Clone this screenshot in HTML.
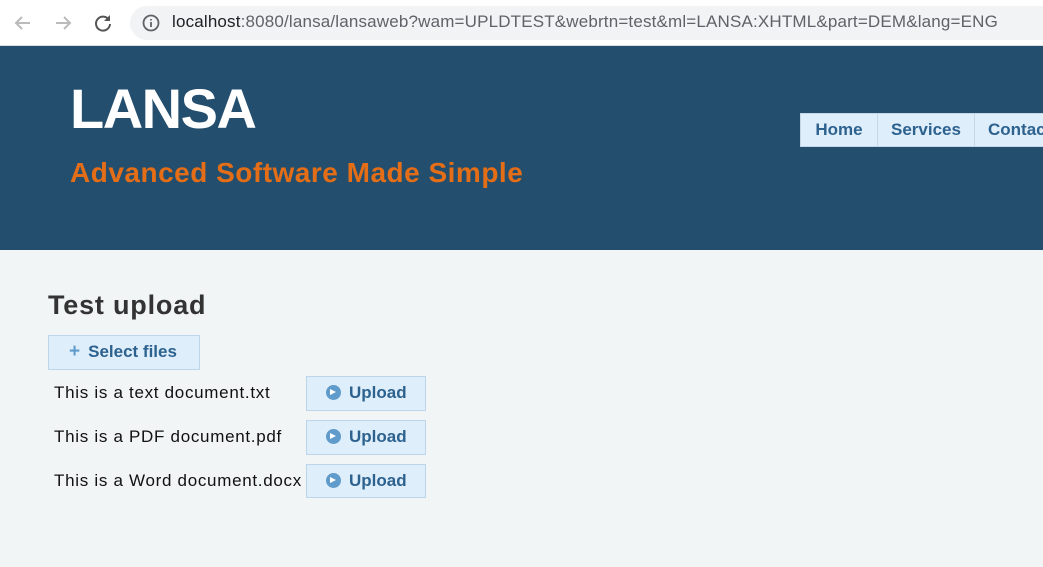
<!DOCTYPE html>
<html><head><style>
*{margin:0;padding:0;box-sizing:border-box}
body{width:1043px;height:567px;overflow:hidden;background:#f1f5f6;font-family:"Liberation Sans",sans-serif;position:relative}
.bar{position:absolute;left:0;top:0;width:1043px;height:46px;background:#fff;border-bottom:1px solid #dadce0}
.pill{position:absolute;left:130px;top:6px;width:930px;height:34px;border-radius:17px;background:#f1f3f4}
.url{position:absolute;left:172px;top:12px;font-size:17px;color:#5f6368;white-space:nowrap;letter-spacing:0.17px}
.url b{font-weight:normal;color:#202124}
.hdr{position:absolute;left:0;top:46px;width:1043px;height:204px;background:#234e6d}
.logo{position:absolute;left:70px;top:76px;font-size:56px;font-weight:bold;color:#fff;letter-spacing:-1.5px}
.sub{position:absolute;left:70px;top:157px;font-size:28px;font-weight:bold;color:#e36e17;white-space:nowrap;letter-spacing:0.5px}
.nav{position:absolute;top:113px;height:34px;background:#dfeefb;border:1px solid #c4d8e8;color:#2d628f;font-weight:bold;font-size:17px;line-height:31px;text-align:center}
h1{position:absolute;left:48px;top:290px;font-size:27px;color:#333;letter-spacing:0.8px}
.btn{position:absolute;background:#dfeefb;border:1px solid #bcd5ea;color:#2d628f;font-weight:bold;font-size:17px;line-height:32px;white-space:nowrap}
.t{position:absolute;left:54px;font-size:17px;color:#111;white-space:nowrap;letter-spacing:0.7px}
.ic{display:inline-block;width:15px;height:15px;border-radius:50%;background:#5f9ccb;vertical-align:-2px;margin-right:8px;position:relative}
.ic:after{content:"";position:absolute;left:4px;top:4px;border-left:6px solid #fff;border-top:3.5px solid transparent;border-bottom:3.5px solid transparent}
</style></head><body>
<div class="bar">
<svg style="position:absolute;left:12px;top:12px" width="22" height="22" viewBox="0 0 22 22"><path d="M18 11H5M10 5l-6 6 6 6" stroke="#bbb" stroke-width="2" fill="none"/></svg>
<svg style="position:absolute;left:52px;top:12px" width="22" height="22" viewBox="0 0 22 22"><path d="M4 11h13M12 5l6 6-6 6" stroke="#bbb" stroke-width="2" fill="none"/></svg>
<svg style="position:absolute;left:92px;top:12px" width="22" height="22" viewBox="0 0 22 22"><path d="M17 8A7 7 0 1 0 18 12" stroke="#555" stroke-width="2" fill="none"/><path d="M18 3v6h-6z" fill="#555"/></svg>
<div class="pill"></div>
<svg style="position:absolute;left:142px;top:14px" width="18" height="18" viewBox="0 0 18 18"><circle cx="9" cy="9" r="7.5" stroke="#5f6368" stroke-width="1.8" fill="none"/><path d="M9 8v5M9 5v1.5" stroke="#5f6368" stroke-width="1.8"/></svg>
<div class="url"><b>localhost</b>:8080/lansa/lansaweb?wam=UPLDTEST&amp;webrtn=test&amp;ml=LANSA:XHTML&amp;part=DEM&amp;lang=ENG</div>
</div>
<div class="hdr"></div>
<div class="logo">LANSA</div>
<div class="sub">Advanced Software Made Simple</div>
<div class="nav" style="left:800px;width:78px">Home</div>
<div class="nav" style="left:877px;width:98px">Services</div>
<div class="nav" style="left:974px;width:90px;text-align:left;padding-left:13px">Contact</div>
<h1>Test upload</h1>
<div class="btn" style="left:48px;top:335px;width:152px;height:35px;padding-left:20px"><span style="color:#5f9ccb;font-size:19px;margin-right:8px">+</span>Select files</div>
<div class="t" style="top:383px">This is a text document.txt</div>
<div class="t" style="top:427px">This is a PDF document.pdf</div>
<div class="t" style="top:471px">This is a Word document.docx</div>
<div class="btn" style="left:306px;top:376px;width:120px;height:35px;padding-left:19px"><span class="ic"></span>Upload</div>
<div class="btn" style="left:306px;top:420px;width:120px;height:35px;padding-left:19px"><span class="ic"></span>Upload</div>
<div class="btn" style="left:306px;top:464px;width:120px;height:34px;padding-left:19px"><span class="ic"></span>Upload</div>
</body></html>
